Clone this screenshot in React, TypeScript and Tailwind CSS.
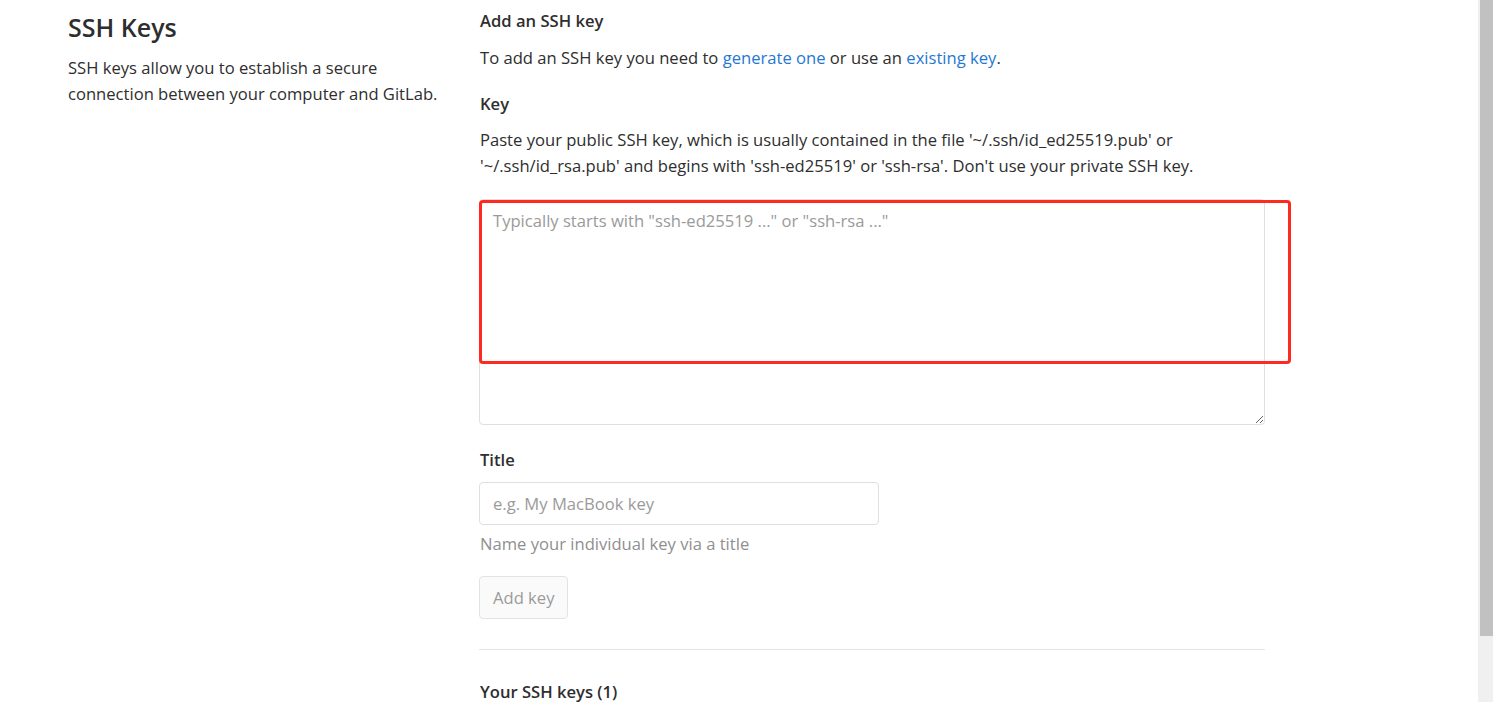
import React from "react";

export default function App() {
  return (
    <div className="flex h-screen w-full overflow-hidden bg-white text-[#2e2e2e] font-['Open_Sans',sans-serif] text-[16.6px] leading-[26px]">
      <div className="relative min-w-0 flex-1">
        <div className="flex pl-[68px]">
          <div className="mr-[37px] w-[374px] shrink-0">
            <h4 className="mt-[11px] text-[25px] font-semibold leading-[32px] text-[#2e2e2e]">SSH Keys</h4>
            <p className="mt-[12px]">
              SSH keys allow you to establish a secure connection between your computer and GitLab.
            </p>
          </div>
          <div className="flex w-[786px] flex-col">
            <h5 className="mt-[8px] pl-[1px] font-semibold">Add an SSH key</h5>
            <p className="mt-[11px] pl-[1px]">
              To add an SSH key you need to{" "}
              <a className="text-[#1f78d1]" href="#">generate one</a> or use an{" "}
              <a className="text-[#1f78d1]" href="#">existing key</a>.
            </p>
            <label className="mt-[20px] pl-[1px] font-semibold">Key</label>
            <p className="mt-[10px] pl-[1px]">
              Paste your public SSH key, which is usually contained in the file '~/.ssh/id_ed25519.pub' or
              '~/.ssh/id_rsa.pub' and begins with 'ssh-ed25519' or 'ssh-rsa'. Don't use your private SSH key.
            </p>
            <textarea
              className="mt-[20px] h-[226px] w-full rounded-[4px] border border-[#dfdfdf] bg-white px-[13px] pt-[8px] text-[16.6px] leading-[26px] outline-none placeholder:text-[#9a9a9a]"
              placeholder={'Typically starts with "ssh-ed25519 ..." or "ssh-rsa ..."'}
            />
            <label className="mt-[22px] pl-[1px] font-semibold">Title</label>
            <input
              className="mt-[9px] h-[43px] w-[400px] rounded-[4px] border border-[#dfdfdf] bg-white px-[13px] text-[16.6px] outline-none placeholder:text-[#9a9a9a]"
              placeholder="e.g. My MacBook key"
            />
            <p className="mt-[6px] pl-[1px] text-[#8f8f8f]">Name your individual key via a title</p>
            <div className="mt-[19px]">
              <button className="h-[43px] rounded-[4px] border border-[#e3e3e3] bg-[#fafafa] px-[13px] text-[#9a9a9a]">
                Add key
              </button>
            </div>
            <hr className="mt-[30px] border-0 border-t border-[#e5e5e5]" />
            <h5 className="mt-[29px] pl-[1px] font-semibold">Your SSH keys (1)</h5>
          </div>
        </div>
        <div className="pointer-events-none absolute left-[479px] top-[200px] h-[164px] w-[812px] rounded-[4px] border-[3px] border-[#ff2a1f]" />
      </div>
      <div className="flex w-[15px] shrink-0 justify-end bg-[#f0f0f0]">
        <div className="h-[636px] w-[13px] bg-[#c1c1c1]" />
      </div>
    </div>
  );
}
